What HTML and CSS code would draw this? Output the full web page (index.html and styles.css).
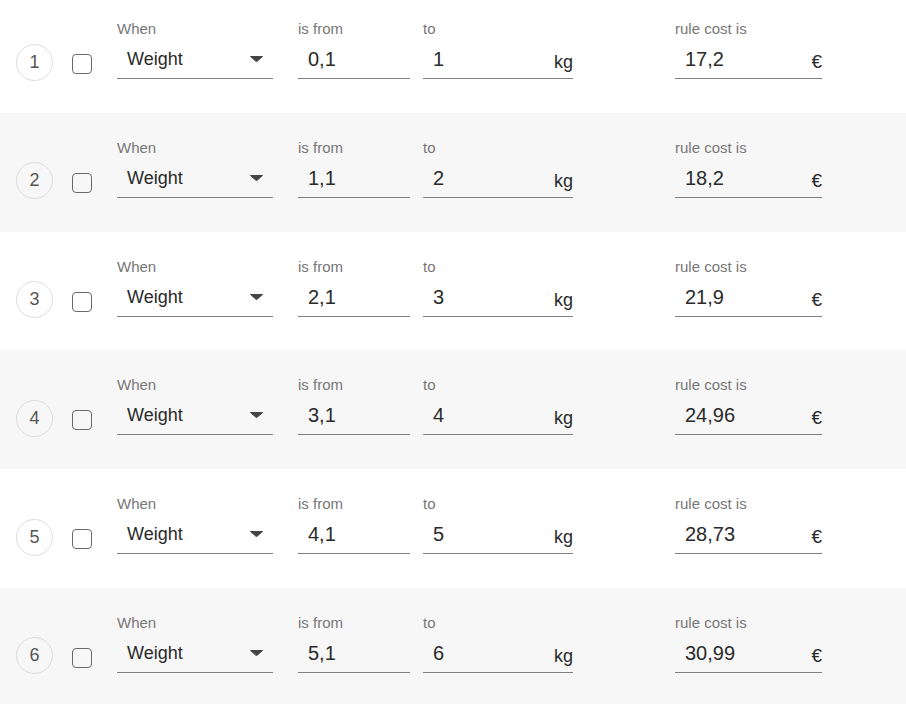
FILE: index.html
```html
<!DOCTYPE html>
<html lang="en">
<head>
<meta charset="utf-8">
<title>Rules</title>
<link rel="stylesheet" href="styles.css">
</head>
<body>
<div class="rules">
  <div class="rule">
    <div class="idx">1</div>
    <span class="check"></span>
    <div class="field f-when"><div class="label">When</div><div class="value select"><span class="sel-text">Weight</span><svg class="arrow" width="13" height="6" viewBox="0 0 13 6"><path d="M0.5 0.5 L12.5 0.5 L6.5 5.8 Z" fill="#444" stroke="#444" stroke-linejoin="round"/></svg></div></div>
    <div class="field f-from"><div class="label">is from</div><div class="value"><span class="num">0,1</span></div></div>
    <div class="field f-to"><div class="label">to</div><div class="value"><span class="num">1</span><span class="unit">kg</span></div></div>
    <div class="field f-cost"><div class="label">rule cost is</div><div class="value"><span class="num">17,2</span><span class="unit euro">€</span></div></div>
  </div>
  <div class="rule">
    <div class="idx">2</div>
    <span class="check"></span>
    <div class="field f-when"><div class="label">When</div><div class="value select"><span class="sel-text">Weight</span><svg class="arrow" width="13" height="6" viewBox="0 0 13 6"><path d="M0.5 0.5 L12.5 0.5 L6.5 5.8 Z" fill="#444" stroke="#444" stroke-linejoin="round"/></svg></div></div>
    <div class="field f-from"><div class="label">is from</div><div class="value"><span class="num">1,1</span></div></div>
    <div class="field f-to"><div class="label">to</div><div class="value"><span class="num">2</span><span class="unit">kg</span></div></div>
    <div class="field f-cost"><div class="label">rule cost is</div><div class="value"><span class="num">18,2</span><span class="unit euro">€</span></div></div>
  </div>
  <div class="rule">
    <div class="idx">3</div>
    <span class="check"></span>
    <div class="field f-when"><div class="label">When</div><div class="value select"><span class="sel-text">Weight</span><svg class="arrow" width="13" height="6" viewBox="0 0 13 6"><path d="M0.5 0.5 L12.5 0.5 L6.5 5.8 Z" fill="#444" stroke="#444" stroke-linejoin="round"/></svg></div></div>
    <div class="field f-from"><div class="label">is from</div><div class="value"><span class="num">2,1</span></div></div>
    <div class="field f-to"><div class="label">to</div><div class="value"><span class="num">3</span><span class="unit">kg</span></div></div>
    <div class="field f-cost"><div class="label">rule cost is</div><div class="value"><span class="num">21,9</span><span class="unit euro">€</span></div></div>
  </div>
  <div class="rule">
    <div class="idx">4</div>
    <span class="check"></span>
    <div class="field f-when"><div class="label">When</div><div class="value select"><span class="sel-text">Weight</span><svg class="arrow" width="13" height="6" viewBox="0 0 13 6"><path d="M0.5 0.5 L12.5 0.5 L6.5 5.8 Z" fill="#444" stroke="#444" stroke-linejoin="round"/></svg></div></div>
    <div class="field f-from"><div class="label">is from</div><div class="value"><span class="num">3,1</span></div></div>
    <div class="field f-to"><div class="label">to</div><div class="value"><span class="num">4</span><span class="unit">kg</span></div></div>
    <div class="field f-cost"><div class="label">rule cost is</div><div class="value"><span class="num">24,96</span><span class="unit euro">€</span></div></div>
  </div>
  <div class="rule">
    <div class="idx">5</div>
    <span class="check"></span>
    <div class="field f-when"><div class="label">When</div><div class="value select"><span class="sel-text">Weight</span><svg class="arrow" width="13" height="6" viewBox="0 0 13 6"><path d="M0.5 0.5 L12.5 0.5 L6.5 5.8 Z" fill="#444" stroke="#444" stroke-linejoin="round"/></svg></div></div>
    <div class="field f-from"><div class="label">is from</div><div class="value"><span class="num">4,1</span></div></div>
    <div class="field f-to"><div class="label">to</div><div class="value"><span class="num">5</span><span class="unit">kg</span></div></div>
    <div class="field f-cost"><div class="label">rule cost is</div><div class="value"><span class="num">28,73</span><span class="unit euro">€</span></div></div>
  </div>
  <div class="rule">
    <div class="idx">6</div>
    <span class="check"></span>
    <div class="field f-when"><div class="label">When</div><div class="value select"><span class="sel-text">Weight</span><svg class="arrow" width="13" height="6" viewBox="0 0 13 6"><path d="M0.5 0.5 L12.5 0.5 L6.5 5.8 Z" fill="#444" stroke="#444" stroke-linejoin="round"/></svg></div></div>
    <div class="field f-from"><div class="label">is from</div><div class="value"><span class="num">5,1</span></div></div>
    <div class="field f-to"><div class="label">to</div><div class="value"><span class="num">6</span><span class="unit">kg</span></div></div>
    <div class="field f-cost"><div class="label">rule cost is</div><div class="value"><span class="num">30,99</span><span class="unit euro">€</span></div></div>
  </div>
</div>
</body>
</html>
```
FILE: styles.css
```css
html, body {
  margin: 0;
  padding: 0;
  background: #ffffff;
  font-family: "Liberation Sans", Arial, sans-serif;
  overflow: hidden;
}

.rules {
  margin-top: -6px;
}

.rule {
  display: flex;
  align-items: flex-start;
  height: 118.75px;
  box-sizing: border-box;
  padding: 26px 0 0 16px;
  background: #ffffff;
}

.rule:nth-child(even) {
  background: #f7f7f7;
}

.idx {
  width: 37px;
  height: 37px;
  box-sizing: border-box;
  border: 1px solid #dcdcdc;
  border-radius: 50%;
  display: flex;
  align-items: center;
  justify-content: center;
  font-size: 18px;
  color: #555555;
  margin-top: 23.5px;
  flex: none;
}

.check {
  width: 20px;
  height: 20px;
  box-sizing: border-box;
  border: 1px solid #6a6a6a;
  border-radius: 4px;
  margin: 34px 0 0 19px;
  flex: none;
}

.field {
  display: flex;
  flex-direction: column;
  flex: none;
}

.label {
  font-size: 15px;
  line-height: 17px;
  height: 17px;
  color: #777777;
  margin-bottom: 10px;
  white-space: nowrap;
}

.value {
  display: flex;
  align-items: flex-end;
  justify-content: space-between;
  height: 24px;
  padding: 0 0 7px 10px;
  border-bottom: 1px solid #808080;
}

.num {
  font-size: 20px;
  line-height: 24px;
  color: #2a2a2a;
}

.unit {
  font-size: 18px;
  line-height: 18px;
  color: #2a2a2a;
}

.euro {
  font-size: 19px;
  line-height: 19px;
}

.select {
  padding-right: 10px;
}

.sel-text {
  font-size: 18px;
  line-height: 24px;
  color: #2a2a2a;
}

.arrow {
  align-self: center;
  display: block;
}

.f-when {
  width: 156px;
  margin-left: 25px;
}

.f-from {
  width: 112px;
  margin-left: 25px;
}

.f-to {
  width: 150px;
  margin-left: 13px;
}

.f-cost {
  width: 147px;
  margin-left: 102px;
}
```
